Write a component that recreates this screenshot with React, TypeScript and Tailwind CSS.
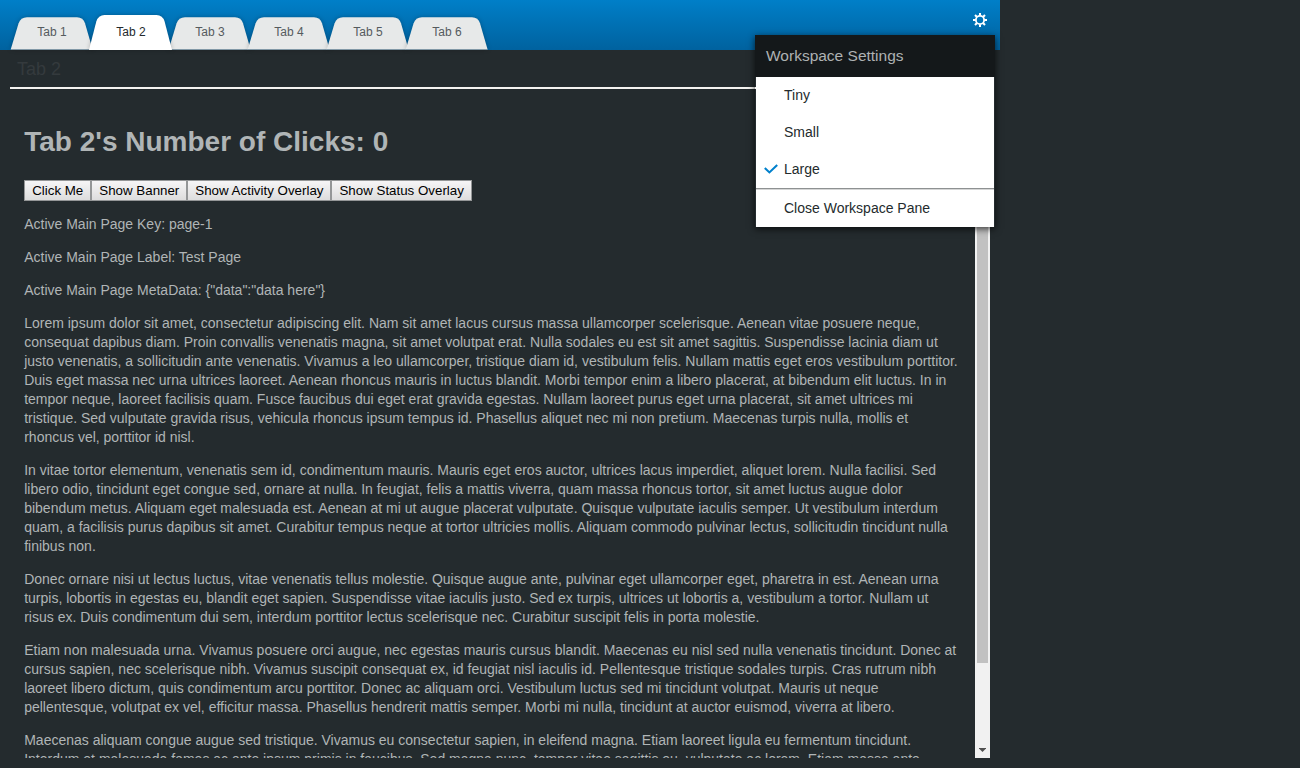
import React, { useState } from "react";

const TABS = ["Tab 1", "Tab 2", "Tab 3", "Tab 4", "Tab 5", "Tab 6"];
const ACTIONS = ["Click Me", "Show Banner", "Show Activity Overlay", "Show Status Overlay"];
const SIZES = ["Tiny", "Small", "Large"];

const PARAGRAPHS = [
  "Active Main Page Key: page-1",
  "Active Main Page Label: Test Page",
  'Active Main Page MetaData: {"data":"data here"}',
  "Lorem ipsum dolor sit amet, consectetur adipiscing elit. Nam sit amet lacus cursus massa ullamcorper scelerisque. Aenean vitae posuere neque, consequat dapibus diam. Proin convallis venenatis magna, sit amet volutpat erat. Nulla sodales eu est sit amet sagittis. Suspendisse lacinia diam ut justo venenatis, a sollicitudin ante venenatis. Vivamus a leo ullamcorper, tristique diam id, vestibulum felis. Nullam mattis eget eros vestibulum porttitor. Duis eget massa nec urna ultrices laoreet. Aenean rhoncus mauris in luctus blandit. Morbi tempor enim a libero placerat, at bibendum elit luctus. In in tempor neque, laoreet facilisis quam. Fusce faucibus dui eget erat gravida egestas. Nullam laoreet purus eget urna placerat, sit amet ultrices mi tristique. Sed vulputate gravida risus, vehicula rhoncus ipsum tempus id. Phasellus aliquet nec mi non pretium. Maecenas turpis nulla, mollis et rhoncus vel, porttitor id nisl.",
  "In vitae tortor elementum, venenatis sem id, condimentum mauris. Mauris eget eros auctor, ultrices lacus imperdiet, aliquet lorem. Nulla facilisi. Sed libero odio, tincidunt eget congue sed, ornare at nulla. In feugiat, felis a mattis viverra, quam massa rhoncus tortor, sit amet luctus augue dolor bibendum metus. Aliquam eget malesuada est. Aenean at mi ut augue placerat vulputate. Quisque vulputate iaculis semper. Ut vestibulum interdum quam, a facilisis purus dapibus sit amet. Curabitur tempus neque at tortor ultricies mollis. Aliquam commodo pulvinar lectus, sollicitudin tincidunt nulla finibus non.",
  "Donec ornare nisi ut lectus luctus, vitae venenatis tellus molestie. Quisque augue ante, pulvinar eget ullamcorper eget, pharetra in est. Aenean urna turpis, lobortis in egestas eu, blandit eget sapien. Suspendisse vitae iaculis justo. Sed ex turpis, ultrices ut lobortis a, vestibulum a tortor. Nullam ut risus ex. Duis condimentum dui sem, interdum porttitor lectus scelerisque nec. Curabitur suscipit felis in porta molestie.",
  "Etiam non malesuada urna. Vivamus posuere orci augue, nec egestas mauris cursus blandit. Maecenas eu nisl sed nulla venenatis tincidunt. Donec at cursus sapien, nec scelerisque nibh. Vivamus suscipit consequat ex, id feugiat nisl iaculis id. Pellentesque tristique sodales turpis. Cras rutrum nibh laoreet libero dictum, quis condimentum arcu porttitor. Donec ac aliquam orci. Vestibulum luctus sed mi tincidunt volutpat. Mauris ut neque pellentesque, volutpat ex vel, efficitur massa. Phasellus hendrerit mattis semper. Morbi mi nulla, tincidunt at auctor euismod, viverra at libero.",
  "Maecenas aliquam congue augue sed tristique. Vivamus eu consectetur sapien, in eleifend magna. Etiam laoreet ligula eu fermentum tincidunt. Interdum et malesuada fames ac ante ipsum primis in faucibus. Sed magna nunc, tempor vitae sagittis eu, vulputate ac lorem. Etiam massa ante,",
];

function GearIcon() {
  return (
    <svg width="14" height="14" viewBox="0 0 14 14" fill="none" stroke="#fff">
      <circle cx="7" cy="7" r="4.1" strokeWidth="1.8" />
      <path strokeWidth="2" d="M7 0v2.6M7 11.4V14M0 7h2.6M11.4 7H14" />
      <path strokeWidth="2" d="M2 2l2 2M10 10l2 2M12 2l-2 2M4 10l-2 2" />
    </svg>
  );
}

function CheckIcon() {
  return (
    <svg className="-mt-px" width="14" height="10" viewBox="0 0 14 10" fill="none" stroke="#0080cc" strokeWidth="2.1">
      <path d="M0.8 4 L5.4 8.4 L13.2 0.9" />
    </svg>
  );
}

function Tab({ label, active, onSelect }: { label: string; active: boolean; onSelect: () => void }) {
  return (
    <button
      onClick={onSelect}
      className={`relative h-[35px] w-[79px] shrink-0 text-[12px] leading-[32px] ${
        active ? "z-10 text-[#242a2d]" : "text-[#555b5e]"
      }`}
    >
      <svg className="absolute left-0 top-0 overflow-visible" width="83" height="35" viewBox="0 0 83 35">
        {active ? (
          <path
            className="drop-shadow-[0_0_2px_rgba(0,0,0,0.25)]"
            fill="#fff"
            d="M0 35 L7.3 6.5 Q9.3 0 15.5 0 H67.5 Q73.7 0 75.6 6.5 L83 35 Z"
          />
        ) : (
          <>
            <path
              className="drop-shadow-[0_0_2px_rgba(0,0,0,0.25)]"
              fill="#e7e9e9"
              d="M0.7 34.5 L8.6 8.3 Q10.6 2.2 17 2.2 H67 Q73.2 2.2 75 8.3 L82.6 34.5 Z"
            />
            <path stroke="#8299a7" d="M1 34.5H82.4" />
          </>
        )}
      </svg>
      <span className="relative -top-px pl-[5px]">{label}</span>
    </button>
  );
}

function SettingsMenu({ size, onSize }: { size: string; onSize: (s: string) => void }) {
  return (
    <div className="absolute left-[755px] top-[35px] z-20 w-[240px] text-[14px] text-[#242b2d] shadow-[0_2px_7px_rgba(0,0,0,0.7)]">
      <div className="h-[42px] bg-[#14181a] pl-[11px] text-[15.5px] leading-[41px] text-[#aeb2b3]">
        Workspace Settings
      </div>
      <div className="mx-px bg-white">
        {SIZES.map((s) => (
          <button key={s} onClick={() => onSize(s)} className="flex h-[37px] w-full items-center pl-2 text-left">
            <span className="w-5">{s === size && <CheckIcon />}</span>
            {s}
          </button>
        ))}
        <div className="h-[2px] border-t border-[#8e9192] bg-[#d5d6d6]" />
        <button className="flex h-[37px] w-full items-center pl-7 text-left">Close Workspace Pane</button>
      </div>
    </div>
  );
}

export default function App() {
  const [active, setActive] = useState("Tab 2");
  const [clicks, setClicks] = useState(0);
  const [size, setSize] = useState("Large");

  return (
    <div className="relative h-[768px] w-[1300px] overflow-hidden bg-[#242b2e] font-['Liberation_Sans',Arial,sans-serif]">
      <div className="flex h-full w-[1000px] flex-col">
        <header className="flex h-[50px] shrink-0 items-end justify-between bg-linear-to-b from-[#007fc8] to-[#00629f] pl-[10px] pr-[13px]">
          <div className="flex">
            {TABS.map((t) => (
              <Tab key={t} label={t} active={t === active} onSelect={() => setActive(t)} />
            ))}
          </div>
          <button className="mb-[23px]" aria-label="Settings">
            <GearIcon />
          </button>
        </header>
        <main className="flex min-h-0 flex-1 flex-col px-[10px] pb-[10px]">
          <div className="h-[39px] shrink-0 border-b-2 border-[#f3f3f0] pl-[7px] text-[18px] leading-[39px] text-[#343a3d]">
            {active}
          </div>
          <div className="flex min-h-0 flex-1">
            <div className="min-w-0 flex-1 overflow-hidden pl-[14.2px] pr-[13.8px] text-[14px] leading-[19px] text-[#b0b5b6]">
              <h1 className="mt-[34px] text-[28px] font-bold leading-[38px]">
                {active}'s Number of Clicks: {clicks}
              </h1>
              <div className="mb-[14px] mt-[19px] flex">
                {ACTIONS.map((a, i) => (
                  <button
                    key={a}
                    onClick={() => i === 0 && setClicks(clicks + 1)}
                    className="h-[21px] border border-[#949697] bg-linear-to-b from-[#f6f5f6] to-[#dddddd] px-[7px] text-[13.333px] leading-[19px] text-black"
                  >
                    {a}
                  </button>
                ))}
              </div>
              {PARAGRAPHS.map((p, i) => (
                <p key={i} className="mb-[14px]">
                  {p}
                </p>
              ))}
            </div>
            <div className="flex w-[15px] shrink-0 flex-col justify-between bg-[#f1f1f1] px-[2px] pt-[15px]">
              <div className="h-[559px] w-[11px] bg-[#c1c1c1]" />
              <svg className="mb-[6px] self-center" width="7" height="4" viewBox="0 0 7 4">
                <path d="M0 0H7V0.5L3.5 4L0 0.5Z" fill="#505050" />
              </svg>
            </div>
          </div>
        </main>
      </div>
      <SettingsMenu size={size} onSize={setSize} />
    </div>
  );
}
